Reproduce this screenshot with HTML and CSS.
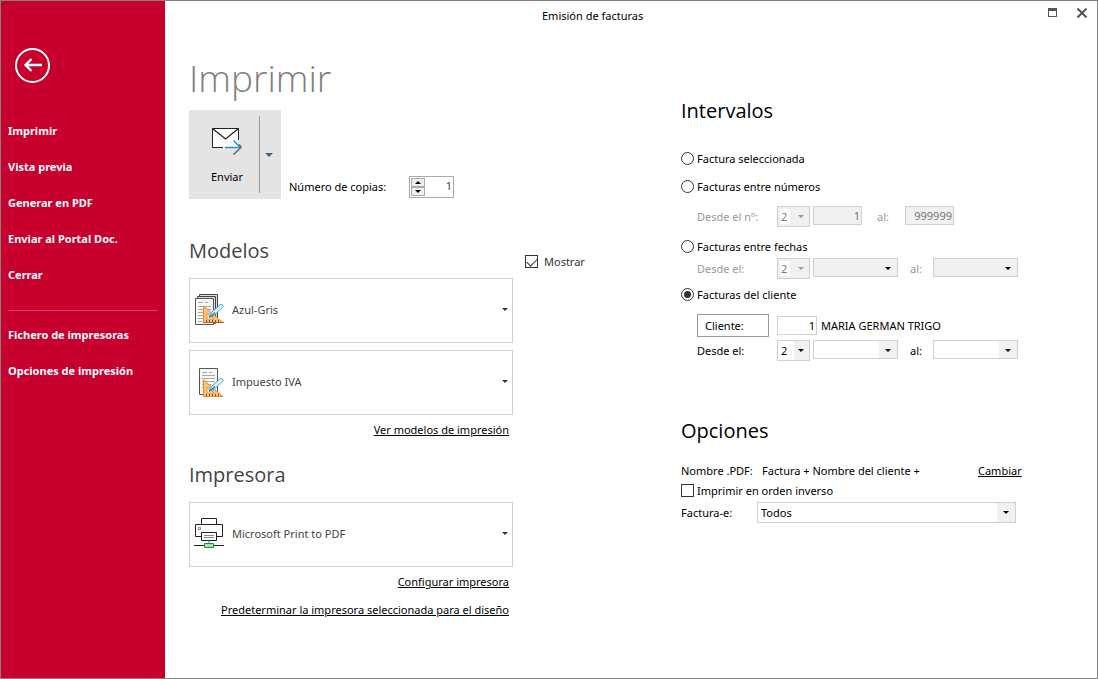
FILE: index.html
```html
<!DOCTYPE html>
<html lang="es">
<head>
<meta charset="utf-8">
<meta name="viewport" content="width=device-width, initial-scale=1">
<title>Emisión de facturas</title>
<link rel="stylesheet" href="styles.css">
</head>
<body>
<div class="window">
  <aside class="sidebar">
    <button class="back" type="button" aria-label="Volver">
      <svg width="36" height="36" viewBox="0 0 36 36" fill="none" stroke="#fff">
        <circle cx="17.5" cy="17.5" r="16.5" stroke-width="2"/>
        <path d="M10 17H27M16.500 11L10.500 17L16.500 23" stroke-width="2.400"/>
      </svg>
    </button>
    <nav class="menu">
      <a href="#">Imprimir</a>
      <a href="#">Vista previa</a>
      <a href="#">Generar en PDF</a>
      <a href="#">Enviar al Portal Doc.</a>
      <a href="#">Cerrar</a>
      <hr>
      <a href="#">Fichero de impresoras</a>
      <a href="#">Opciones de impresión</a>
    </nav>
  </aside>

  <div class="main">
    <header class="titlebar">
      <span class="caption">Emisión de facturas</span>
      <div class="controls">
        <button type="button" aria-label="Maximizar">
          <svg width="9" height="9" viewBox="0 0 9 9" shape-rendering="crispEdges"><path d="M0 0H9V9H0ZM1 3V8H8V3Z" fill="#555" fill-rule="evenodd"/></svg>
        </button>
        <button type="button" aria-label="Cerrar">
          <svg width="10" height="10" viewBox="0 0 10 10" stroke="#555" stroke-width="2"><path d="M0.500 0.500L9.500 9.500M9.500 0.500L0.500 9.500"/></svg>
        </button>
      </div>
    </header>

    <main class="content">
      <div class="left">
        <h1>Imprimir</h1>
        <div class="send-row">
          <div class="split">
            <button class="send" type="button">
              <svg width="32" height="30" viewBox="0 0 32 30" fill="none">
                <path d="M1.500 1.500H27.500V20.500H1.500Z" fill="#fff"/>
                <path d="M12 20.500H1.500V1.500H27.500V13" stroke="#222"/>
                <path d="M1.500 1.500L14.500 12L27.500 1.500" stroke="#222" stroke-width="1.300"/>
                <path d="M14 20.500H29M22.500 13.500L29.500 20.500" stroke="#1a95d4" stroke-width="1.500"/>
                <path d="M30 20.500L22.500 27.500M28 17.500L30.500 20.500" stroke="#666" stroke-width="1.500"/>
              </svg>
              <span>Enviar</span>
            </button>
            <button class="split-arrow" type="button" aria-label="Más opciones de envío"><i class="caret caret-blue"></i></button>
          </div>
          <label class="copies-label" for="copies">Número de copias:</label>
          <div class="spinner">
            <div class="steps">
              <button type="button" aria-label="Más"><i class="caret caret-up"></i></button>
              <button type="button" aria-label="Menos"><i class="caret"></i></button>
            </div>
            <input id="copies" type="text" inputmode="numeric" value="1">
          </div>
        </div>

        <section class="models">
          <h2>Modelos</h2>
          <label class="check show"><input type="checkbox" checked>Mostrar</label>
          <div class="cards">
            <button class="card" type="button">
              <svg width="30" height="32" viewBox="0 0 30 32" fill="none">
                <path d="M5.500 0.500H23.500V27.500H5.500Z" fill="#ddd" stroke="#444"/>
                <path d="M3.500 2.500H21.500V29.500H3.500Z" fill="#ddd" stroke="#444"/>
                <path d="M1.500 4.500H19.500V30.500H1.500Z" fill="#f7f7f7" stroke="#555"/>
                <path d="M4 8.500H9M11 8.500H14M4 12.500H17M4 15.500H17M4 18.500H17M4 21.500H15M4 24.500H12M4 27.500H8" stroke="#aaa"/>
                <path d="M9.500 12V28.500H29Z" fill="#fcc07a" stroke="#ee8a1d"/>
                <path d="M13 19.500V25H20Z" fill="#fff" stroke="#ee8a1d"/>
                <path d="M12.500 28V26M15.500 28V26M18.500 28V26M21.500 28V26M24.500 28V26" stroke="#6d5540"/>
                <path d="M9 28.500H30" stroke="#cc5518"/>
                <path d="M15 23L17.500 18.500L27 10L29.500 12L20 21.500Z" fill="#e8f7ff" stroke="#34a4d8"/>
                <path d="M15 23.500L21 18.500" stroke="#1684c0" stroke-width="1.500"/>
              </svg>
              <span>Azul-Gris</span><i class="caret"></i>
            </button>
            <button class="card" type="button">
              <svg width="30" height="32" viewBox="0 0 30 32" fill="none">
                <path d="M5.500 2.500H23.500V28.500H5.500Z" fill="#f7f7f7" stroke="#555"/>
                <path d="M8 6.500H13M15 6.500H18M8 9.500H21M8 12.500H21M8 15.500H21M8 18.500H17M8 21.500H13" stroke="#aaa"/>
                <path d="M9.500 14V30.500H29Z" fill="#fcc07a" stroke="#ee8a1d"/>
                <path d="M13 21.500V27H20Z" fill="#fff" stroke="#ee8a1d"/>
                <path d="M12.500 30V28M15.500 30V28M18.500 30V28M21.500 30V28M24.500 30V28" stroke="#6d5540"/>
                <path d="M15 25L17.500 20.500L27 12L29.500 14L20 23.500Z" fill="#e8f7ff" stroke="#34a4d8"/>
                <path d="M15 25.500L21 20.500" stroke="#1684c0" stroke-width="1.500"/>
              </svg>
              <span>Impuesto IVA</span><i class="caret"></i>
            </button>
          </div>
          <p class="links"><a href="#">Ver modelos de impresión</a></p>
        </section>

        <section class="printer">
          <h2>Impresora</h2>
          <div class="cards">
            <button class="card" type="button">
              <svg width="30" height="32" viewBox="0 0 30 32" fill="none">
                <path d="M7.500 6.500V0.500H22.500V6.500" stroke="#222"/>
                <path d="M7 18.500H1.500V6.500H28.500V18.500H23" stroke="#222"/>
                <path d="M4.500 9.500H6.500V11.500H4.500Z" stroke="#888"/>
                <path d="M7.500 14.500H22.500V22.500H7.500Z" stroke="#222"/>
                <path d="M10 17.500H20M10 19.500H20" stroke="#888"/>
                <path d="M15 23V25" stroke="#bbb" stroke-width="2"/>
                <path d="M0 27.500H30" stroke="#222"/>
                <path d="M10.500 25.500H19.500V29.500H10.500Z" fill="#b4dcb9" stroke="#109a2c"/>
              </svg>
              <span>Microsoft Print to PDF</span><i class="caret"></i>
            </button>
          </div>
          <p class="links"><a href="#">Configurar impresora</a><a href="#">Predeterminar la impresora seleccionada para el diseño</a></p>
        </section>
      </div>

      <div class="right">
        <form class="ranges">
          <h2>Intervalos</h2>
          <label class="radio"><input type="radio" name="range">Factura seleccionada</label>
          <label class="radio"><input type="radio" name="range">Facturas entre números</label>
          <div class="fields numbers">
            <label for="n-from">Desde el nº:</label>
            <span class="combo short"><select aria-label="Serie de números" disabled><option>2</option></select><i class="caret"></i></span>
            <input id="n-from" type="text" value="1" disabled>
            <label class="to" for="n-to">al:</label>
            <input id="n-to" type="text" value="999999" disabled>
          </div>
          <label class="radio"><input type="radio" name="range">Facturas entre fechas</label>
          <div class="fields dates">
            <label class="off" for="d-from">Desde el:</label>
            <span class="combo short"><select aria-label="Serie de fechas" disabled><option>2</option></select><i class="caret"></i></span>
            <span class="combo gray"><select id="d-from" disabled><option></option></select><i class="caret"></i></span>
            <label class="to off" for="d-to">al:</label>
            <span class="combo gray"><select id="d-to" disabled><option></option></select><i class="caret"></i></span>
          </div>
          <label class="radio"><input type="radio" name="range" checked>Facturas del cliente</label>
          <div class="fields client">
            <button class="client-button" type="button">Cliente:</button>
            <input type="text" value="1" aria-label="Código de cliente">
            <span>MARIA GERMAN TRIGO</span>
          </div>
          <div class="fields dates last">
            <label for="c-from">Desde el:</label>
            <span class="combo short"><select aria-label="Serie del cliente"><option>2</option></select><i class="caret"></i></span>
            <span class="combo"><select id="c-from"><option></option></select><i class="caret"></i></span>
            <label class="to" for="c-to">al:</label>
            <span class="combo"><select id="c-to"><option></option></select><i class="caret"></i></span>
          </div>
        </form>

        <section class="options">
          <h2>Opciones</h2>
          <div class="pdf-name">
            <span>Nombre .PDF:</span>
            <span>Factura + Nombre del cliente +</span>
            <a href="#">Cambiar</a>
          </div>
          <label class="check"><input type="checkbox">Imprimir en orden inverso</label>
          <div class="einvoice">
            <label for="einvoice">Factura-e:</label>
            <span class="combo"><select id="einvoice"><option>Todos</option></select><i class="caret"></i></span>
          </div>
        </section>
      </div>
    </main>
  </div>
</div>
</body>
</html>
```
FILE: styles.css
```css
* {
  box-sizing: border-box;
}

body {
  margin: 0;
  background: #fff;
  color: #000;
  font: 11px/20px "Noto Sans", "Open Sans", sans-serif;
}

button,
input,
select {
  margin: 0;
  border: 0;
  border-radius: 0;
  background: none;
  color: inherit;
  font: inherit;
}

button {
  padding: 0;
}

a {
  color: inherit;
}

h1,
h2,
p {
  margin: 0;
}

.window {
  display: flex;
  min-height: 100vh;
  border: 1px solid #808080;
}

/* Sidebar */
.sidebar {
  flex: 0 0 164px;
  padding: 47px 7px 0;
  background: #c8002d;
  color: #fff;
}

.back {
  display: block;
  height: 36px;
  margin-left: 7px;
}

.back svg {
  display: block;
}

.menu {
  display: flex;
  flex-direction: column;
  margin-top: 29px;
}

.menu a {
  line-height: 36px;
  font-weight: 700;
  text-decoration: none;
}

.menu hr {
  width: 100%;
  margin: 17px 0 6px;
  border: 0;
  border-top: 1px solid #d64463;
}

/* Title bar */
.main {
  display: flex;
  flex: 1;
  flex-direction: column;
  min-width: 0;
}

.titlebar {
  display: grid;
  grid-template-columns: 1fr auto;
  align-items: start;
  height: 30px;
  padding: 5px 10px 0 0;
}

.caption {
  padding-left: 377px;
}

.controls {
  display: flex;
  align-items: center;
  gap: 20px;
  height: 13px;
}

.controls svg {
  display: block;
}

/* Content */
.content {
  display: grid;
  grid-template-columns: minmax(0, 492fr) minmax(0, 416fr);
  padding: 14px 0 40px 24px;
}

h1 {
  color: #808080;
  font: 300 37px/65px "Open Sans", "Noto Sans", sans-serif;
}

h2 {
  font: 400 20px/32px "Open Sans", "Noto Sans", sans-serif;
}

.left h2 {
  margin-bottom: 11px;
  color: #444;
}

.caret {
  width: 0;
  height: 0;
  border: 3px solid transparent;
  border-top-color: #000;
  border-bottom: 0;
}

.caret-up {
  border-top: 0;
  border-bottom: 3px solid #000;
}

.caret-blue {
  border-width: 4px 4px 0;
  border-top-color: #44608f;
}

.send-row {
  display: flex;
  align-items: flex-end;
}

.split {
  display: flex;
  flex: 0 0 92px;
  height: 89px;
  padding: 6px 0;
  background: #e4e4e4;
}

.send {
  display: flex;
  flex: 1;
  flex-direction: column;
  align-items: center;
  gap: 10px;
  padding: 11px 0 0 6px;
  border-right: 1px solid #999;
}

.split-arrow {
  display: flex;
  flex: 0 0 21px;
  align-items: center;
  padding: 1px 0 0 5px;
}

.copies-label {
  margin-left: 8px;
  width: 120px;
  padding-bottom: 2px;
}

.spinner {
  display: flex;
  width: 45px;
  height: 22px;
  margin-bottom: 1px;
  padding: 1px;
  border: 1px solid #aaa;
}

.steps {
  display: grid;
  flex: 0 0 14px;
}

.steps button {
  display: flex;
  align-items: center;
  justify-content: center;
  border: 1px solid #aaa;
  background: #f0f0f0;
}

.spinner input {
  flex: 1;
  width: 0;
  padding: 0 0 2px;
  color: #444;
  text-align: right;
}

.models,
.printer {
  display: grid;
  grid-template-columns: minmax(0, 324px) auto;
  column-gap: 12px;
}

.models {
  margin-top: 36px;
}

.printer {
  margin-top: 19px;
}

.cards {
  display: grid;
  grid-column: 1;
  gap: 7px;
}

.card {
  display: flex;
  align-items: center;
  gap: 8px;
  min-height: 65px;
  padding: 0 4px 2px;
  border: 1px solid #d0d0d0;
  color: #444;
  text-align: left;
}

.card span {
  flex: 1;
}

.card .caret {
  border-top-color: #333;
}

.links {
  display: flex;
  grid-column: 1;
  flex-direction: column;
  align-items: flex-end;
  gap: 8px;
  padding: 5px 4px 0 0;
}

/* Check boxes and radios */
.check,
.radio {
  display: flex;
  align-items: center;
  gap: 3px;
}

.show {
  align-self: end;
  gap: 6px;
  margin-bottom: 6px;
  color: #333;
}

.check input,
.radio input {
  display: grid;
  place-items: center;
  width: 13px;
  height: 13px;
  margin-bottom: 1px;
  border: 1px solid #333;
  appearance: none;
}

.radio input {
  border-radius: 50%;
}

.radio input:checked::before {
  width: 7px;
  height: 7px;
  border-radius: 50%;
  background: #333;
  content: "";
}

.check input:checked::before {
  width: 9px;
  height: 5px;
  border: solid #333;
  border-width: 0 0 1px 1px;
  content: "";
  transform: translateY(-1px) rotate(-45deg);
}

/* Ranges */
.right {
  padding-top: 50px;
}

.ranges {
  display: flex;
  flex-direction: column;
}

.ranges h2 {
  margin-bottom: 22px;
}

.radio + .radio {
  margin-top: 8px;
}

.fields {
  display: grid;
  align-items: start;
  padding-left: 16px;
  line-height: 22px;
}

.fields input {
  width: 100%;
  height: 19px;
  padding: 0 4px;
  border: 1px solid #d0d0d0;
  line-height: 17px;
  text-align: right;
}

.fields input:disabled {
  background: #f0f0f0;
  color: #777;
}

.numbers {
  grid-template-columns: 77px 33px 49px 37px 49px;
  column-gap: 3px;
  margin: 9px 0;
  color: #999;
}

.numbers input {
  padding: 0 1px;
}

.dates {
  grid-template-columns: 77px 33px 85px 29px 85px;
  column-gap: 3px;
  margin: 1px 0 5px;
}

.to {
  padding-left: 12px;
}

.dates .to {
  padding-left: 9px;
}

.off {
  color: #999;
}

.client {
  grid-template-columns: 72px 40px auto;
  align-items: center;
  column-gap: 8px;
  margin-top: 9px;
}

.client span {
  margin-left: -4px;
}

.client input {
  padding: 0 1px;
}

.client-button {
  height: 23px;
  padding-left: 7px;
  border: 1px solid #999;
  text-align: left;
}

.last {
  margin: 3px 0 0;
}

.combo {
  display: grid;
  position: relative;
  height: 19px;
  border: 1px solid #d0d0d0;
  background: linear-gradient(#f0f0f0, #f0f0f0) right / 18px 100% no-repeat;
}

.combo select {
  width: 100%;
  padding: 0 3px;
  appearance: none;
  line-height: 17px;
  opacity: 1;
}

.combo .caret {
  position: absolute;
  top: 8px;
  right: 6px;
  pointer-events: none;
}

.combo.short {
  height: 21px;
  background-size: 15px 100%;
}

.combo.short .caret {
  right: 5px;
}

.short select:disabled {
  background: linear-gradient(#fff, #fff) 2px 2px / 10px 15px no-repeat #f0f0f0;
  color: #777;
}

.short select:disabled + .caret {
  border-top-color: #999;
}

.combo.gray {
  background: #f0f0f0;
}

/* Options */
.options {
  margin-top: 53px;
}

.options h2 {
  margin-bottom: 14px;
}

.pdf-name {
  display: grid;
  grid-template-columns: 78px 213px auto;
  column-gap: 3px;
}

.einvoice {
  display: grid;
  grid-template-columns: 76px 259px;
  margin-top: 1px;
  line-height: 22px;
}

.einvoice .combo {
  height: 21px;
}
```
